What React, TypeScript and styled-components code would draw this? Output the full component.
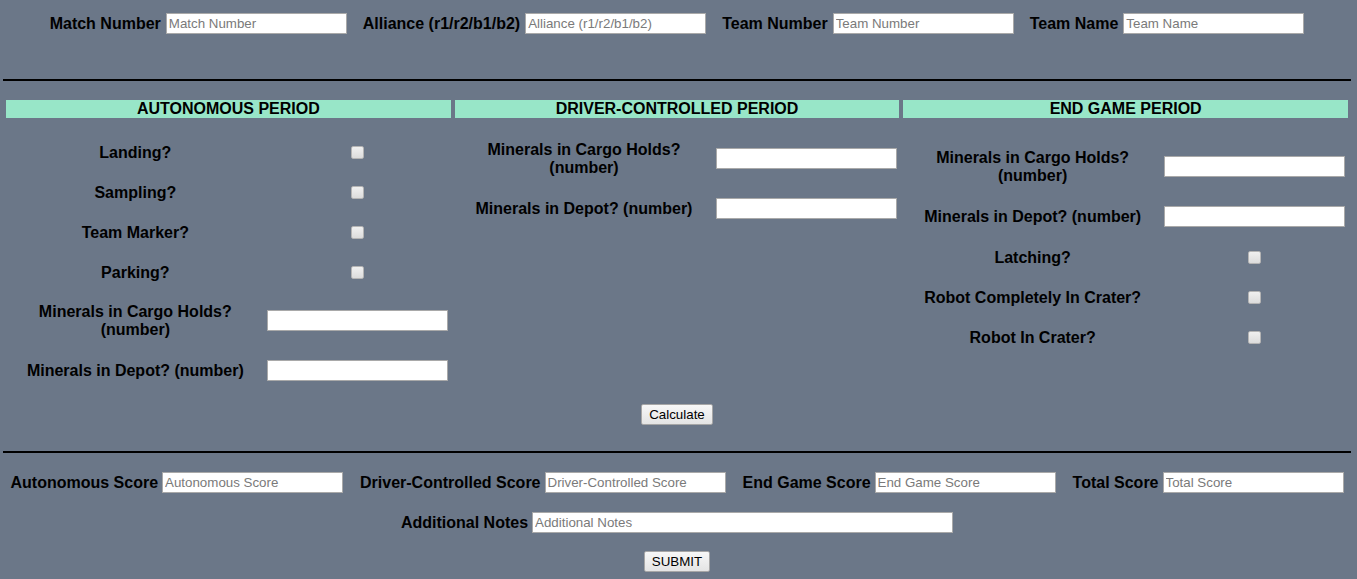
import { styled, createGlobalStyle } from 'styled-components';

const GlobalStyle = createGlobalStyle`
  html, body {
    margin: 0;
    padding: 0;
    background: #6b7788;
  }
  body {
    font-family: "Liberation Sans", Arial, sans-serif;
    color: #000;
  }
`;

type Field = { label: string; kind: 'check' | 'number' };

const autonomous: Field[] = [
  { label: 'Landing?', kind: 'check' },
  { label: 'Sampling?', kind: 'check' },
  { label: 'Team Marker?', kind: 'check' },
  { label: 'Parking?', kind: 'check' },
  { label: 'Minerals in Cargo Holds? (number)', kind: 'number' },
  { label: 'Minerals in Depot? (number)', kind: 'number' },
];

const driver: Field[] = [
  { label: 'Minerals in Cargo Holds? (number)', kind: 'number' },
  { label: 'Minerals in Depot? (number)', kind: 'number' },
];

const endGame: Field[] = [
  { label: 'Minerals in Cargo Holds? (number)', kind: 'number' },
  { label: 'Minerals in Depot? (number)', kind: 'number' },
  { label: 'Latching?', kind: 'check' },
  { label: 'Robot Completely In Crater?', kind: 'check' },
  { label: 'Robot In Crater?', kind: 'check' },
];

const periods = [
  { title: 'AUTONOMOUS PERIOD', fields: autonomous, top: 14 },
  { title: 'DRIVER-CONTROLLED PERIOD', fields: driver, top: 12 },
  { title: 'END GAME PERIOD', fields: endGame, top: 20 },
];

const LabeledInput = ({
  label,
  width,
  spacing = 4,
}: {
  label: string;
  width?: number;
  spacing?: number;
}) => (
  <St.Group $spacing={spacing}>
    <St.InlineLabel>{label}</St.InlineLabel>
    <St.TextInput type="text" placeholder={label} $width={width} />
  </St.Group>
);

const App = () => {
  return (
    <St.Page>
      <GlobalStyle />
      <St.InfoRow>
        <LabeledInput label="Match Number" spacing={5} />
        <LabeledInput label="Alliance (r1/r2/b1/b2)" spacing={5} />
        <LabeledInput label="Team Number" spacing={5} />
        <LabeledInput label="Team Name" spacing={5} />
      </St.InfoRow>

      <St.Divider $top={45} />

      <St.Periods>
        {periods.map((p) => (
          <St.Period key={p.title}>
            <St.PeriodTitle>{p.title}</St.PeriodTitle>
            <St.FieldTable $top={p.top}>
              {p.fields.map((f) => (
                <St.FieldRow key={f.label}>
                  <St.FieldLabel>{f.label}</St.FieldLabel>
                  <St.FieldCell>
                    {f.kind === 'check' ? (
                      <St.Check type="checkbox" />
                    ) : (
                      <St.TextInput type="text" />
                    )}
                  </St.FieldCell>
                </St.FieldRow>
              ))}
            </St.FieldTable>
          </St.Period>
        ))}
      </St.Periods>

      <St.ButtonRow $top={13}>
        <St.Button type="button">Calculate</St.Button>
      </St.ButtonRow>

      <St.Divider $top={26} />

      <St.ScoreRow $top={19}>
        <LabeledInput label="Autonomous Score" />
        <LabeledInput label="Driver-Controlled Score" />
        <LabeledInput label="End Game Score" />
        <LabeledInput label="Total Score" />
      </St.ScoreRow>

      <St.ScoreRow $top={19}>
        <LabeledInput label="Additional Notes" width={421} />
      </St.ScoreRow>

      <St.ButtonRow $top={18}>
        <St.Button type="submit">SUBMIT</St.Button>
      </St.ButtonRow>
    </St.Page>
  );
};

export default App;

const St = {
  Page: styled.div`
    padding: 0 3px 10px;
    width: 1354px;
    box-sizing: border-box;
  `,

  InfoRow: styled.div`
    display: flex;
    justify-content: center;
    align-items: center;
    gap: 16px;
    padding-top: 13px;
  `,

  ScoreRow: styled.div<{ $top: number }>`
    display: flex;
    justify-content: center;
    align-items: center;
    gap: 17px;
    margin-top: ${({ $top }) => $top}px;
  `,

  Group: styled.div<{ $spacing: number }>`
    display: flex;
    align-items: center;
    gap: ${({ $spacing }) => $spacing}px;
  `,

  InlineLabel: styled.span`
    font-size: 16px;
    font-weight: 700;
    line-height: 18px;
    white-space: nowrap;
  `,

  TextInput: styled.input<{ $width?: number }>`
    box-sizing: border-box;
    width: ${({ $width }) => $width ?? 181}px;
    height: 21px;
    margin: 0;
    padding: 1px 2px;
    border: 1px solid #a9a9a9;
    background: #fff;
    font-family: "Liberation Sans", Arial, sans-serif;
    font-size: 13.33px;
    color: #000;
    outline: none;

    &::placeholder {
      color: #7a7a7a;
    }
  `,

  Divider: styled.div<{ $top: number }>`
    height: 2px;
    margin-top: ${({ $top }) => $top}px;
    background: #000;
  `,

  Periods: styled.div`
    display: grid;
    grid-template-columns: repeat(3, 1fr);
    align-items: start;
    gap: 4px;
    margin-top: 19px;
    padding: 0 3px;
  `,

  Period: styled.div`
    display: flex;
    flex-direction: column;
  `,

  PeriodTitle: styled.div`
    height: 18px;
    background: #98e6c8;
    text-align: center;
    font-size: 16px;
    font-weight: 700;
    line-height: 18px;
  `,

  FieldTable: styled.div<{ $top: number }>`
    display: grid;
    grid-template-columns: 1fr 186px;
    padding-top: ${({ $top }) => $top}px;
  `,

  FieldRow: styled.div`
    display: contents;
  `,

  FieldLabel: styled.div`
    display: flex;
    align-items: center;
    justify-content: center;
    padding: 11px 2px 10px;
    text-align: center;
    font-size: 16px;
    font-weight: 700;
    line-height: 18px;
  `,

  FieldCell: styled.div`
    display: flex;
    align-items: center;
    justify-content: center;
    padding: 10.5px 0;
  `,

  Check: styled.input`
    appearance: none;
    box-sizing: border-box;
    width: 13px;
    height: 13px;
    margin: 3px 0;
    border: 1px solid #b4b4b4;
    border-radius: 2px;
    background: linear-gradient(#f0f0f0, #dcdcdc);
  `,

  ButtonRow: styled.div<{ $top: number }>`
    display: flex;
    justify-content: center;
    margin-top: ${({ $top }) => $top}px;
  `,

  Button: styled.button`
    box-sizing: border-box;
    height: 21px;
    padding: 1px 7px;
    border: 1px solid #a6a6a6;
    border-radius: 2px;
    background: linear-gradient(#f7f7f7, #e4e4e4);
    font-family: "Liberation Sans", Arial, sans-serif;
    font-size: 13.33px;
    line-height: 17px;
    color: #000;
  `,
};
